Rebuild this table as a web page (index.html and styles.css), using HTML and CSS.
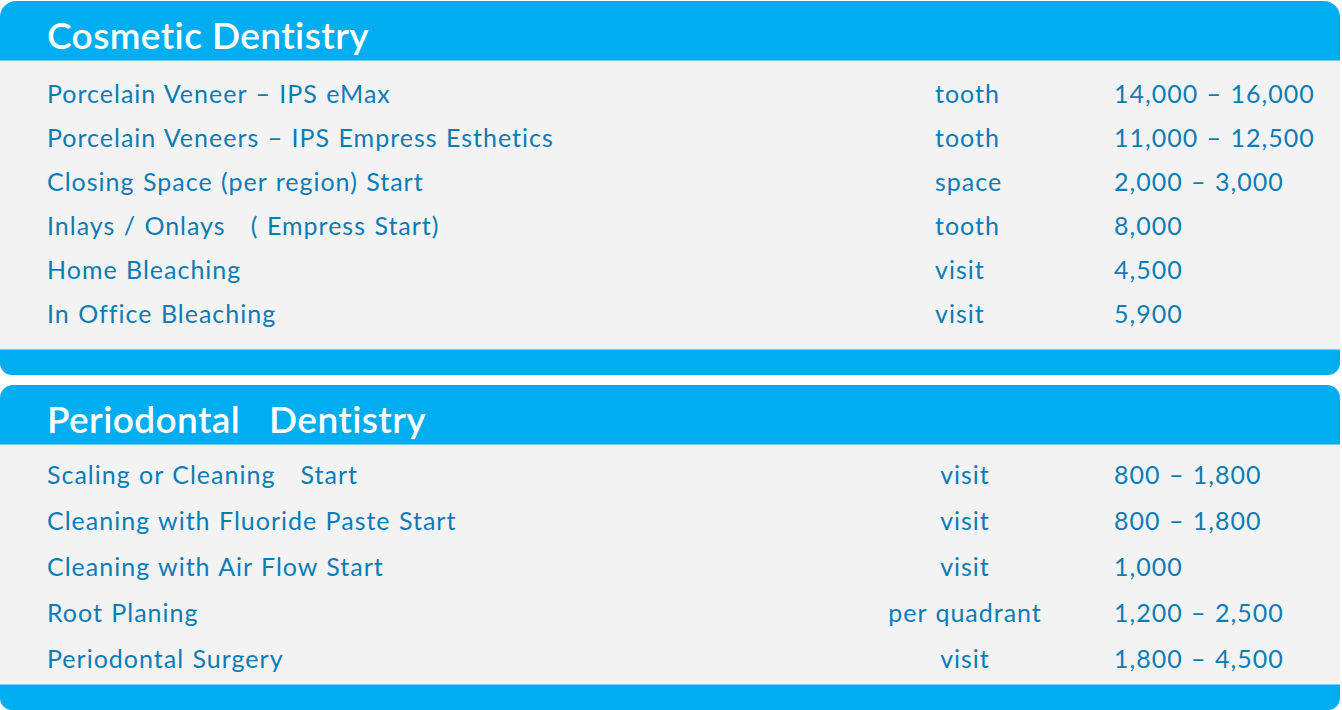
FILE: index.html
```html
<!DOCTYPE html>
<html>

<head>
    <link rel="stylesheet" href="styles.css">
</head>

<body>
    <section class="panel panel-cosmetic">
        <h2 class="panel-title">Cosmetic Dentistry</h2>
        <div class="panel-body">
            <div class="row"><span class="name">Porcelain Veneer – IPS eMax</span><span class="unit">tooth</span><span class="price">14,000 – 16,000</span></div>
            <div class="row"><span class="name">Porcelain Veneers – IPS Empress Esthetics</span><span class="unit">tooth</span><span class="price">11,000 – 12,500</span></div>
            <div class="row"><span class="name">Closing Space (per region) Start</span><span class="unit">space</span><span class="price">2,000 – 3,000</span></div>
            <div class="row"><span class="name">Inlays / Onlays&nbsp;&nbsp;&nbsp;( Empress Start)</span><span class="unit">tooth</span><span class="price">8,000</span></div>
            <div class="row"><span class="name">Home Bleaching</span><span class="unit">visit</span><span class="price">4,500</span></div>
            <div class="row"><span class="name">In Office Bleaching</span><span class="unit">visit</span><span class="price">5,900</span></div>
        </div>
        <div class="panel-foot"></div>
    </section>

    <section class="panel panel-perio">
        <h2 class="panel-title">Periodontal&nbsp;&nbsp;&nbsp;Dentistry</h2>
        <div class="panel-body">
            <div class="row"><span class="name">Scaling or Cleaning&nbsp;&nbsp;&nbsp;Start</span><span class="unit">visit</span><span class="price">800 – 1,800</span></div>
            <div class="row"><span class="name">Cleaning with Fluoride Paste Start</span><span class="unit">visit</span><span class="price">800 – 1,800</span></div>
            <div class="row"><span class="name">Cleaning with Air Flow Start</span><span class="unit">visit</span><span class="price">1,000</span></div>
            <div class="row"><span class="name">Root Planing</span><span class="unit">per quadrant</span><span class="price">1,200 – 2,500</span></div>
            <div class="row"><span class="name">Periodontal Surgery</span><span class="unit">visit</span><span class="price">1,800 – 4,500</span></div>
        </div>
        <div class="panel-foot"></div>
    </section>
</body>

</html>
```

FILE: styles.css
```css
body {
    margin: 0;
    background: #ffffff;
    font-family: "Lato", "Open Sans", sans-serif;
    font-variant-ligatures: none;
    width: 1340px;
}

.panel {
    display: flex;
    flex-direction: column;
}

.panel-cosmetic {
    margin-top: 1px;
}

.panel-perio {
    margin-top: 10px;
}

.panel-title {
    margin: 0;
    height: 60px;
    box-sizing: border-box;
    padding: 15px 0 0 47px;
    background-color: #00aeef;
    border-bottom: 1px solid #6fd0f4;
    color: #ffffff;
    font-size: 37px;
    font-weight: 600;
    letter-spacing: 0.4px;
    line-height: 38px;
}

.panel-cosmetic .panel-title {
    border-radius: 16px 16px 0 0;
}

.panel-perio .panel-title {
    border-radius: 13px 13px 0 0;
}

.panel-body {
    background-color: #f3f3f3;
    color: #0b7cb6;
    font-size: 25px;
    letter-spacing: 1px;
    word-spacing: 1px;
}

.panel-cosmetic .panel-body {
    padding: 10px 0 14px;
}

.panel-perio .panel-body {
    padding: 6px 0 3px;
}

.row {
    display: grid;
    align-items: center;
    padding-left: 47px;
    white-space: nowrap;
}

.panel-cosmetic .row {
    height: 44px;
    grid-template-columns: 888px 179px 1fr;
}

.panel-perio .row {
    height: 46px;
    grid-template-columns: 834px 168px 1fr;
}

.panel-perio .unit {
    text-align: center;
}

.panel-perio .price {
    padding-left: 65px;
}

.panel-foot {
    height: 26px;
    background-color: #00aeef;
    border-top: 1px solid #6fd0f4;
    box-sizing: border-box;
    border-radius: 0 0 12px 12px;
}
```
